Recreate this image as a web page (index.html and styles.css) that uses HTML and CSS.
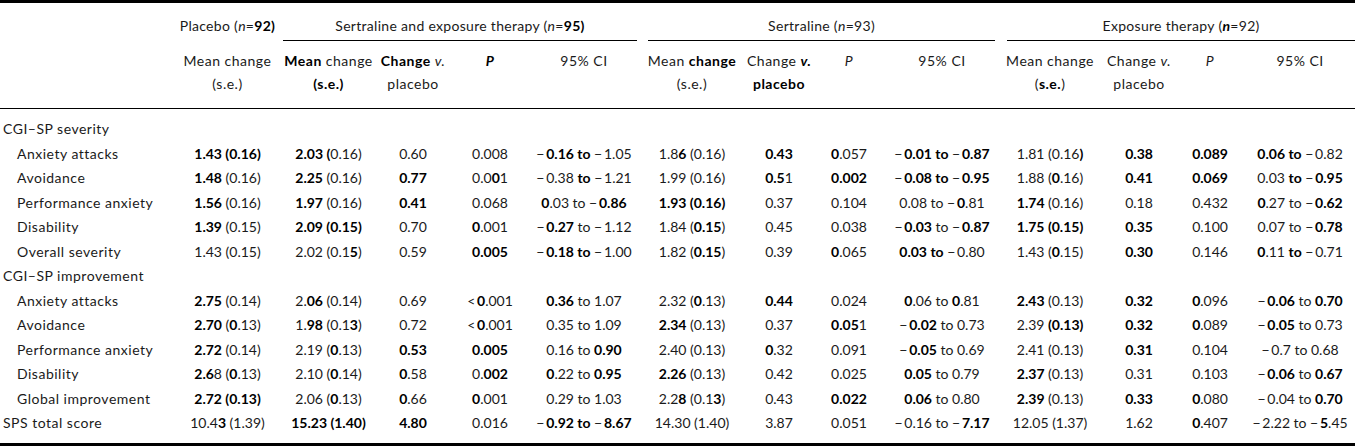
FILE: index.html
```html
<!DOCTYPE html>
<html lang="en">
<head>
<meta charset="utf-8">
<title>Mean change from baseline</title>
<link rel="stylesheet" href="styles.css">
</head>
<body>
<table class="results">
  <colgroup>
    <col class="c-label">
    <col class="c-pl">
    <col class="c-mc">
    <col class="c-cv">
    <col class="c-p">
    <col class="c-ci">
    <col class="c-mc2">
    <col class="c-cv2">
    <col class="c-p2">
    <col class="c-ci2">
    <col class="c-mc3">
    <col class="c-cv3">
    <col class="c-p3">
    <col class="c-ci3">
  </colgroup>
  <thead>
    <tr class="groups">
      <th></th>
      <th><span class="grp grp-none">Placebo (<i>n</i>=<b>92)</b></span></th>
      <th colspan="4"><span class="grp grp-se">Sertraline and exposure therapy (<i>n</i>=<b>95)</b></span></th>
      <th colspan="4"><span class="grp grp-s">Sertraline (<i>n</i>=93)</span></th>
      <th colspan="4"><span class="grp grp-e">Exposure therapy (<b><i>n</i></b>=92)</span></th>
    </tr>
    <tr class="cols">
      <th></th>
      <th>Mean change<br>(s.e.)</th>
      <th><b>Mean</b> change<br><b>(s.e.)</b></th>
      <th><b>Change</b> <i>v.</i><br>placebo</th>
      <th><b><i>P</i></b></th>
      <th>95% CI</th>
      <th>Mean <b>change</b><br>(s.e.)</th>
      <th>Change <b><i>v.</i></b><br><b>placebo</b></th>
      <th><i>P</i></th>
      <th>95% CI</th>
      <th>Mean change<br>(<b>s.e.</b>)</th>
      <th>Change <i>v.</i><br>placebo</th>
      <th><i>P</i></th>
      <th>95% CI</th>
    </tr>
  </thead>
  <tbody>
    <tr class="first">
      <td class="lab sec">CGI–SP severity</td>
      <td></td><td></td><td></td><td></td><td></td><td></td><td></td><td></td><td></td><td></td><td></td><td></td><td></td>
    </tr>
    <tr>
      <td class="lab sub">Anxiety attacks</td>
      <td><b>1.43 (0.16)</b></td>
      <td><b>2.03 (</b>0.16)</td>
      <td>0.60</td>
      <td>0.008</td>
      <td>−&#8201;<b>0.16 to</b> −&#8201;1.05</td>
      <td>1.8<b>6</b> (0.16)</td>
      <td><b>0.43</b></td>
      <td><b>0</b>.057</td>
      <td>−&#8201;<b>0.01 to</b> −&#8201;<b>0.87</b></td>
      <td>1.81 (0.16<b>)</b></td>
      <td><b>0.38</b></td>
      <td><b>0.089</b></td>
      <td><b>0.06 to</b> −&#8201;0.82</td>
    </tr>
    <tr>
      <td class="lab sub">Avoidance</td>
      <td><b>1.48</b> (0.16)</td>
      <td><b>2.25</b> (0.16)</td>
      <td><b>0.77</b></td>
      <td>0.0<b>0</b>1</td>
      <td>−&#8201;0.38 <b>to</b> −&#8201;1.21</td>
      <td>1.99 (0.16)</td>
      <td><b>0.5</b>1</td>
      <td><b>0.002</b></td>
      <td>−&#8201;<b>0.08 to</b> −&#8201;<b>0.95</b></td>
      <td>1.88 (<b>0</b>.16)</td>
      <td><b>0.41</b></td>
      <td><b>0.069</b></td>
      <td>0.03 <b>to</b> −&#8201;<b>0.95</b></td>
    </tr>
    <tr>
      <td class="lab sub">Performance anxiety</td>
      <td><b>1.56</b> (0.16)</td>
      <td><b>1.97</b> (0.16)</td>
      <td><b>0.41</b></td>
      <td>0.068</td>
      <td><b>0</b>.03 to −&#8201;<b>0.86</b></td>
      <td><b>1.93 (0.16)</b></td>
      <td>0.37</td>
      <td>0.104</td>
      <td>0.08 to −&#8201;<b>0</b>.81</td>
      <td><b>1.74</b> (0.16)</td>
      <td>0.18</td>
      <td>0.432</td>
      <td><b>0</b>.27 to −&#8201;<b>0.62</b></td>
    </tr>
    <tr>
      <td class="lab sub">Disability</td>
      <td><b>1.39</b> (0.15)</td>
      <td><b>2.09 (0.15)</b></td>
      <td>0.70</td>
      <td><b>0</b>.001</td>
      <td>−&#8201;<b>0.27</b> to −&#8201;1.12</td>
      <td>1.84 (<b>0.15</b>)</td>
      <td>0.45</td>
      <td>0.038</td>
      <td>−&#8201;<b>0.03</b> to −&#8201;<b>0.87</b></td>
      <td><b>1.75 (0.15)</b></td>
      <td><b>0.35</b></td>
      <td>0.100</td>
      <td>0.07 to −&#8201;<b>0.78</b></td>
    </tr>
    <tr>
      <td class="lab sub">Overall severity</td>
      <td>1.43 (0.15)</td>
      <td>2.02 (0.1<b>5</b>)</td>
      <td>0.59</td>
      <td><b>0.005</b></td>
      <td>−&#8201;<b>0.18 to</b> −&#8201;1.00</td>
      <td>1.82 (<b>0.15</b>)</td>
      <td>0.39</td>
      <td><b>0</b>.065</td>
      <td><b>0.03 to</b> −&#8201;0.80</td>
      <td>1.43 (<b>0</b>.15)</td>
      <td><b>0.30</b></td>
      <td>0.146</td>
      <td><b>0</b>.11 <b>to</b> −&#8201;0.71</td>
    </tr>
    <tr>
      <td class="lab sec">CGI–SP improvement</td>
      <td></td><td></td><td></td><td></td><td></td><td></td><td></td><td></td><td></td><td></td><td></td><td></td><td></td>
    </tr>
    <tr>
      <td class="lab sub">Anxiety attacks</td>
      <td><b>2.75</b> (0.14)</td>
      <td>2.<b>06</b> (0.14)</td>
      <td>0.69</td>
      <td>&lt;&#8201;<b>0</b>.001</td>
      <td><b>0.36</b> to 1.07</td>
      <td>2.32 (<b>0</b>.13)</td>
      <td><b>0.44</b></td>
      <td>0.024</td>
      <td><b>0</b>.06 to <b>0</b>.81</td>
      <td><b>2.43</b> (0.13)</td>
      <td><b>0.32</b></td>
      <td><b>0</b>.096</td>
      <td>−&#8201;<b>0.06</b> to <b>0.70</b></td>
    </tr>
    <tr>
      <td class="lab sub">Avoidance</td>
      <td><b>2.70</b> (<b>0</b>.13)</td>
      <td>1.<b>98</b> (0.1<b>3</b>)</td>
      <td>0.72</td>
      <td>&lt;&#8201;<b>0</b>.001</td>
      <td>0.35 to 1.09</td>
      <td><b>2.34</b> (0.13)</td>
      <td>0.37</td>
      <td><b>0.05</b>1</td>
      <td>−&#8201;<b>0.02</b> to 0.73</td>
      <td>2.39 <b>(0.13)</b></td>
      <td><b>0.32</b></td>
      <td><b>0</b>.089</td>
      <td>−&#8201;<b>0.05</b> to 0.73</td>
    </tr>
    <tr>
      <td class="lab sub">Performance anxiety</td>
      <td><b>2.72</b> (0.14)</td>
      <td>2.19 (<b>0</b>.13)</td>
      <td><b>0.53</b></td>
      <td><b>0.005</b></td>
      <td>0.16 to <b>0.90</b></td>
      <td>2.40 (0.13)</td>
      <td><b>0</b>.32</td>
      <td>0.091</td>
      <td>−&#8201;<b>0.05</b> to 0.69</td>
      <td>2.41 (0.13)</td>
      <td><b>0.31</b></td>
      <td>0.104</td>
      <td>−&#8201;0.7 to 0.68</td>
    </tr>
    <tr>
      <td class="lab sub">Disability</td>
      <td><b>2.6</b>8 (<b>0</b>.13)</td>
      <td>2.10 (<b>0</b>.14)</td>
      <td><b>0</b>.58</td>
      <td>0.<b>002</b></td>
      <td><b>0</b>.22 to <b>0.95</b></td>
      <td><b>2.26</b> (0.13)</td>
      <td>0.42</td>
      <td>0.025</td>
      <td><b>0.05</b> to 0.79</td>
      <td><b>2.37</b> (0.13)</td>
      <td>0.31</td>
      <td>0.103</td>
      <td>−&#8201;<b>0.06</b> to <b>0.67</b></td>
    </tr>
    <tr>
      <td class="lab sub">Global improvement</td>
      <td><b>2.72 (0.13)</b></td>
      <td>2.06 (<b>0</b>.13)</td>
      <td><b>0</b>.66</td>
      <td><b>0</b>.001</td>
      <td>0.29 to 1.03</td>
      <td>2.2<b>8</b> (0.1<b>3</b>)</td>
      <td>0.43</td>
      <td><b>0.022</b></td>
      <td><b>0.06</b> to 0.80</td>
      <td><b>2.39</b> (0.13)</td>
      <td><b>0.33</b></td>
      <td><b>0</b>.080</td>
      <td>−&#8201;0.04 to <b>0.70</b></td>
    </tr>
    <tr class="last">
      <td class="lab sec">SPS total score</td>
      <td>10.4<b>3</b> (1.39)</td>
      <td><b>15.23 (1.40)</b></td>
      <td><b>4.80</b></td>
      <td>0.016</td>
      <td>−&#8201;<b>0.92 to</b> −&#8201;<b>8.67</b></td>
      <td>14.30 (1.40)</td>
      <td>3.87</td>
      <td>0.051</td>
      <td>−&#8201;0.16 to −&#8201;<b>7.17</b></td>
      <td>12.05 (1.37)</td>
      <td>1.62</td>
      <td><b>0</b>.407</td>
      <td>−&#8201;2.22 to −&#8201;<b>5</b>.45</td>
    </tr>
  </tbody>
</table>
</body>
</html>
```
FILE: styles.css
```css
html, body {
  margin: 0;
  padding: 0;
  background: #fff;
}

body {
  font-family: "Lato", "Open Sans", "Liberation Sans", sans-serif;
  font-size: 14px;
  color: #1a1a1a;
}

b {
  font-weight: 700;
  color: #000;
}

.results {
  width: 1355px;
  table-layout: fixed;
  border-collapse: separate;
  border-spacing: 0;
  border-top: 3px solid #000;
  border-bottom: 3px solid #000;
}

.c-label { width: 175px; }
.c-pl { width: 105px; }
.c-mc { width: 97px; }
.c-cv { width: 72px; }
.c-p { width: 82px; }
.c-ci { width: 106px; }
.c-mc2 { width: 110px; }
.c-cv2 { width: 64px; }
.c-p2 { width: 76px; }
.c-ci2 { width: 110px; }
.c-mc3 { width: 106px; }
.c-cv3 { width: 72px; }
.c-p3 { width: 70px; }
.c-ci3 { width: 110px; }

th {
  font-weight: 400;
  text-align: center;
  padding: 0;
  letter-spacing: 0.5px;
}

.groups th {
  padding-top: 14px;
  vertical-align: bottom;
  letter-spacing: 0.3px;
}

.grp {
  display: block;
  line-height: 18px;
  padding-bottom: 5px;
  border-bottom: 1px solid #000;
  white-space: nowrap;
}

.grp-none { border-bottom-color: transparent; }
.grp-se { margin-left: 3px; }
.grp-s { margin-left: 11px; margin-right: 2px; }
.grp-e { margin-left: 10px; }

.cols th {
  line-height: 23px;
  padding-top: 8px;
  padding-bottom: 13px;
  border-bottom: 1px solid #000;
  vertical-align: top;
  white-space: nowrap;
}

td {
  padding: 0;
  line-height: 24.5px;
  text-align: center;
  white-space: nowrap;
  vertical-align: middle;
}

td.lab {
  text-align: left;
  letter-spacing: 0.5px;
}

td.sec { padding-left: 3px; }
td.sub { padding-left: 17px; }

tr.first td { padding-top: 8px; }
tr.last td { padding-bottom: 7.5px; }
```
